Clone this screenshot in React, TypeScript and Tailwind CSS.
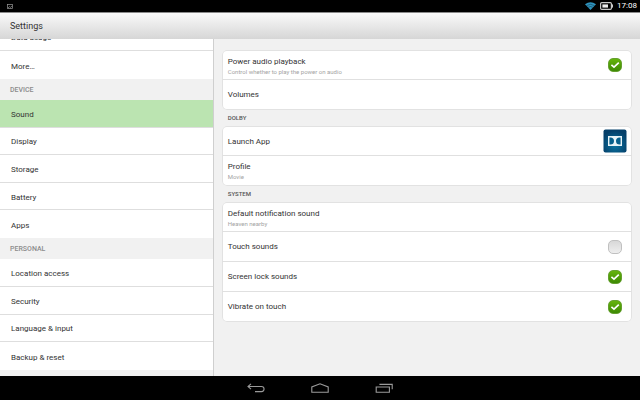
import React, { useState } from 'react';

const deviceItems = ['Sound', 'Display', 'Storage', 'Battery', 'Apps'];
const personalItems = ['Location access', 'Security', 'Language & input', 'Backup & reset'];

const SideHeading: React.FC<{ children: React.ReactNode }> = ({ children }) => (
  <h2 className="h-[21px] shrink-0 flex items-center px-[10px] pt-[2px] bg-[#f1f1f1] text-[7px] font-medium text-[#8c8c8c] uppercase">
    {children}
  </h2>
);

const SideItem: React.FC<{ label: string; active?: boolean }> = ({ label, active }) => (
  <li className="flex border-b border-[#dedede] last:border-b-0">
    <a
      href="#"
      aria-current={active ? 'page' : undefined}
      className={`flex flex-1 items-center px-[11px] pt-[3px] ${active ? 'bg-[#bbe4b1]' : ''}`}
    >
      {label}
    </a>
  </li>
);

const CardHeading: React.FC<{ children: React.ReactNode }> = ({ children }) => (
  <h2 className="h-4 flex items-center px-[6px] pb-[2px] text-[6px] font-medium text-[#555] uppercase">{children}</h2>
);

const Card: React.FC<{ children: React.ReactNode }> = ({ children }) => (
  <div className="rounded-[5px] bg-white ring-1 ring-[#e2e2e2] ring-inset">{children}</div>
);

type RowProps = { title: string; note?: string; children?: React.ReactNode };

const rowClass = 'group h-[30px] w-full flex items-center justify-between pl-[6px] border-b border-[#e0e0e0] last:border-b-0 text-left';

const RowText: React.FC<RowProps> = ({ title, note }) => (
  <span className="flex flex-col group-first:pt-[3px]">
    <span className="leading-[10px]">{title}</span>
    {note && <span className="text-[6px] leading-[9px] text-[#a3a3a3]">{note}</span>}
  </span>
);

const ButtonRow: React.FC<RowProps> = ({ title, note, children }) => (
  <button type="button" className={rowClass}>
    <RowText title={title} note={note} />
    {children}
  </button>
);

const CheckRow: React.FC<RowProps & { initial?: boolean }> = ({ title, note, initial = false }) => {
  const [checked, setChecked] = useState(initial);
  return (
    <label className={`${rowClass} pr-[9px]`}>
      <RowText title={title} note={note} />
      <span className="grid size-4">
        <input
          type="checkbox"
          checked={checked}
          onChange={(e) => setChecked(e.target.checked)}
          className="col-start-1 row-start-1 m-px appearance-none rounded-[5px] border border-[#c0c0c0] bg-linear-to-b from-[#d8d8d8] to-[#eeeeee] checked:border-[#65a030] checked:from-[#65b40c] checked:to-[#3d8a04]"
        />
        {checked && (
          <svg viewBox="0 0 16 16" className="col-start-1 row-start-1 size-4 pointer-events-none" fill="none" stroke="#fff" strokeWidth="1.6">
            <path d="M4.4 7.8 7 10.2 11.8 5.6" />
          </svg>
        )}
      </span>
    </label>
  );
};

const DolbyIcon: React.FC = () => (
  <svg viewBox="0 0 24 24" className="size-6 mr-[5px]" aria-hidden="true">
    <defs>
      <radialGradient id="dolby" cy="0.65" r="0.6">
        <stop offset="0" stopColor="#0b78a6" />
        <stop offset="1" stopColor="#043f69" />
      </radialGradient>
    </defs>
    <rect x="0.5" y="0.5" width="23" height="23" rx="2" fill="url(#dolby)" />
    <rect x="5" y="7" width="14" height="10" fill="#e8f4f8" />
    <path d="M6.4 8.4h1a3.6 3.6 0 0 1 0 7.2h-1zM17.6 8.4h-1a3.6 3.6 0 0 0 0 7.2h1z" fill="#07608c" />
  </svg>
);

const App: React.FC = () => {
  return (
    <div className="h-screen flex flex-col bg-[#f1f1f1] font-['Roboto',sans-serif] text-[8px] text-[#333] overflow-hidden">
      {/* Status bar */}
      <div className="h-3 shrink-0 flex items-center justify-between bg-black text-white pl-[7px] pr-[3px]">
        <svg viewBox="0 0 6 5" className="w-[6px] h-[5px]" fill="none" stroke="#999" strokeWidth="0.7">
          <rect x="0.4" y="0.4" width="5.2" height="4.2" />
          <path d="M1 4 2.5 2.6 3.4 3.4 5 2" />
        </svg>
        <div className="flex items-center gap-1">
          <svg viewBox="0 0 11 8" className="w-[11px] h-2">
            <path d="M0 2.2Q5.5-1.6 11 2.2L5.5 8z" fill="#2f93bd" />
            <path d="M1.6 3.6Q5.5 1 9.4 3.6M3.2 5.3Q5.5 3.7 7.8 5.3" fill="none" stroke="#0a2c3c" strokeWidth="0.5" />
          </svg>
          <svg viewBox="0 0 13 8" className="w-[13px] h-2">
            <rect x="0.6" y="0.6" width="10.8" height="6.8" rx="1.2" fill="none" stroke="#c9c9c9" strokeWidth="1.2" />
            <rect x="2.4" y="2.4" width="5.6" height="3.2" fill="#eee" />
            <rect x="12" y="2.4" width="1" height="3.2" fill="#c9c9c9" />
          </svg>
          <span>17:08</span>
        </div>
      </div>

      {/* Title bar */}
      <header className="h-[27px] shrink-0 flex items-center px-[10px] pt-[2px] border-t border-[#8a8a8a] bg-linear-to-b from-[#fafafa] to-[#d6d6d6]">
        <h1 className="text-[9px]">Settings</h1>
      </header>

      <div className="flex flex-1 min-h-0">
        {/* Categories, scrolled down a little */}
        <nav className="w-[33.4%] shrink-0 overflow-hidden bg-white border-r border-[#cfcfcf]">
          <div className="-mt-4 flex flex-col">
            <ul className="grid auto-rows-fr h-14">
              <SideItem label="Data usage" />
              <SideItem label="More…" />
            </ul>
            <SideHeading>Device</SideHeading>
            <ul className="grid auto-rows-fr h-[138px]">
              {deviceItems.map((item) => (
                <SideItem key={item} label={item} active={item === 'Sound'} />
              ))}
            </ul>
            <SideHeading>Personal</SideHeading>
            <ul className="grid auto-rows-fr h-[111px]">
              {personalItems.map((item) => (
                <SideItem key={item} label={item} />
              ))}
            </ul>
          </div>
          <div className="h-[21px] bg-[#f1f1f1]" />
        </nav>

        {/* Sound settings */}
        <main className="flex-1 min-w-0 overflow-hidden px-2 pt-[11px]">
          <Card>
            <CheckRow title="Power audio playback" note="Control whether to play the power on audio" initial />
            <ButtonRow title="Volumes" />
          </Card>
          <CardHeading>Dolby</CardHeading>
          <Card>
            <ButtonRow title="Launch App">
              <DolbyIcon />
            </ButtonRow>
            <ButtonRow title="Profile" note="Movie" />
          </Card>
          <CardHeading>System</CardHeading>
          <Card>
            <ButtonRow title="Default notification sound" note="Heaven nearby" />
            <CheckRow title="Touch sounds" />
            <CheckRow title="Screen lock sounds" initial />
            <CheckRow title="Vibrate on touch" initial />
          </Card>
        </main>
      </div>

      {/* Navigation bar */}
      <footer className="h-6 shrink-0 flex items-center justify-center gap-[46px] bg-black">
        <button type="button" aria-label="Back">
          <svg viewBox="0 0 18 10" className="w-[18px] h-[10px]" fill="none" stroke="#9a9a9a" strokeWidth="1.1">
            <path d="M4 0.8 1 3.5 4 6.2M1 3.5H14.5A2.4 2.4 0 0 1 14.5 8.6H8" />
          </svg>
        </button>
        <button type="button" aria-label="Home">
          <svg viewBox="0 0 18 10" className="w-[18px] h-[10px]" fill="none" stroke="#9a9a9a" strokeWidth="1.1">
            <path d="M0.8 9.2V4L9 0.8 17.2 4V9.2z" />
          </svg>
        </button>
        <button type="button" aria-label="Recent apps">
          <svg viewBox="0 0 18 10" className="w-[18px] h-[10px]" fill="none" stroke="#9a9a9a" strokeWidth="1.1">
            <path d="M1.2 4H14.4V9.2H1.2zM4.4 1.4H17.2V6.2" />
          </svg>
        </button>
      </footer>
    </div>
  );
};

export default App;
